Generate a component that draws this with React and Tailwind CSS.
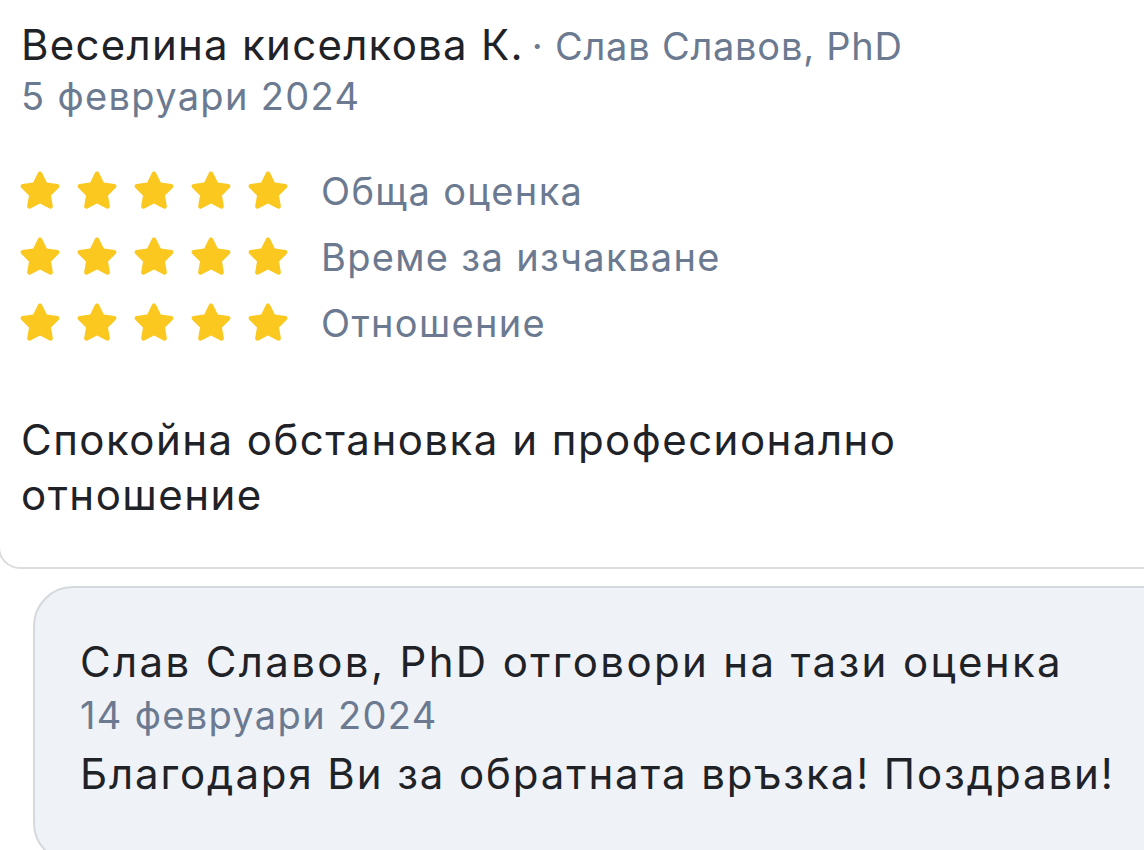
export default function App() {
  const ratings = ["Обща оценка", "Време за изчакване", "Отношение"]

  return (
    <div lang="bg" className="w-[1144px] h-[850px] overflow-hidden bg-white font-['Inter',sans-serif]">
      {/* Review card */}
      <div className="-ml-[2px] mr-[-40px] pl-[21px] pt-[19px] pb-[45px] rounded-bl-[22px] border-b-2 border-l-2 border-[#dcdde0] bg-white">
        <div className="flex items-baseline text-[42px] leading-[52px] tracking-[0.03em] whitespace-nowrap">
          <span className="text-[#1f2227]">Веселина киселкова К.</span>
          <span className="ml-[8px] text-[38px] tracking-[0.02em] text-[#6b7a90]">· Слав Славов, PhD</span>
        </div>
        <div className="text-[38px] leading-[48px] tracking-[0.035em] text-[#6b7a90]">5 февруари 2024</div>

        <div className="mt-[48px] flex flex-col gap-[20px]">
          {ratings.map((label) => (
            <div key={label} className="flex items-center h-[46px]">
              <div className="flex gap-[11px] -ml-[4px]">
                {[0, 1, 2, 3, 4].map((i) => (
                  <svg key={i} width="46" height="46" viewBox="0 0 24 24">
                    <path
                      d="M12 1.8c.45 0 .85.25 1.05.66l2.5 5.1 5.6.82c.95.14 1.33 1.3.64 1.97l-4.05 3.950.96 5.58c.16.94-.83 1.66-1.68 1.21L12 18.46l-5.02 2.63c-.85.45-1.84-.27-1.68-1.21l.96-5.58-4.05-3.95c-.69-.67-.31-1.83.64-1.97l5.6-.82 2.5-5.1c.2-.41.6-.66 1.05-.66z"
                      fill="#fac81f"
                    />
                  </svg>
                ))}
              </div>
              <span className="ml-[30px] text-[38px] tracking-[0.035em] text-[#6b7a90]">{label}</span>
            </div>
          ))}
        </div>

        <p className="mt-[66px] text-[42px] leading-[55px] tracking-[0.035em] text-[#1f2227] w-[940px]">
          Спокойна обстановка и професионално отношение
        </p>
      </div>

      {/* Owner reply */}
      <div className="ml-[33px] mr-[-40px] mt-[17px] pl-[45px] pt-[48px] pb-[60px] rounded-[40px] border-2 border-[#d5d8dd] bg-[#eff2f7]">
        <div className="text-[42px] leading-[52px] tracking-[0.056em] text-[#1f2227] whitespace-nowrap">Слав Славов, PhD отговори на тази оценка</div>
        <div className="mt-[3px] text-[38px] leading-[48px] tracking-[0.035em] text-[#6b7a90]">14 февруари 2024</div>
        <p className="mt-[7px] text-[42px] leading-[55px] tracking-[0.045em] text-[#1f2227] whitespace-nowrap">Благодаря Ви за обратната връзка! Поздрави!</p>
      </div>
    </div>
  )
}
